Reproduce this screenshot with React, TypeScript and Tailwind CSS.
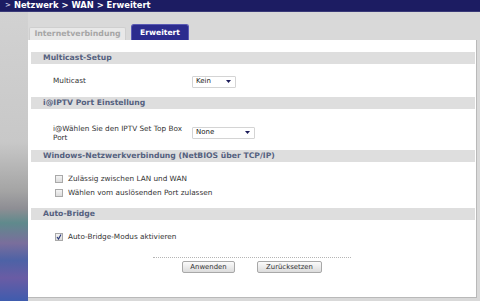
import React from 'react';

const SectionHeader: React.FC<{ title: string }> = ({ title }) => (
  <div className="h-[12px] bg-[#dedede] pl-[12px] flex items-center font-bold text-[7.7px] text-[#55617f] leading-none">
    {title}
  </div>
);

const Select: React.FC<{ value: string; width: string }> = ({ value, width }) => (
  <div className={`${width} h-[12px] bg-white border border-[#d4d4d4] rounded-[1px] flex items-center justify-between pl-[3px] pr-[4px] text-[7px] text-[#222]`}>
    <span>{value}</span>
    <svg width="5" height="3" viewBox="0 0 5 3">
      <path d="M0 0 L5 0 L2.5 3 Z" fill="#1c1c5a" />
    </svg>
  </div>
);

const Checkbox: React.FC<{ checked?: boolean; label: string }> = ({ checked, label }) => (
  <div className="flex items-center gap-[5px] h-[10px]">
    <span className="w-[8px] h-[8px] border border-[#a9a9a9] bg-gradient-to-b from-[#f4f4f4] to-[#dcdcdc] flex items-center justify-center">
      {checked && (
        <svg width="6" height="6" viewBox="0 0 6 6">
          <path d="M1 3 L2.5 5 L5 0.5" stroke="#2b3a7a" strokeWidth="1.2" fill="none" />
        </svg>
      )}
    </span>
    <span className="text-[7.3px] text-[#333]">{label}</span>
  </div>
);

const Button: React.FC<{ label: string; width: string }> = ({ label, width }) => (
  <button className={`${width} h-[12px] border border-[#a8a8a8] rounded-[2px] bg-gradient-to-b from-[#fbfbfb] to-[#dcdcdc] text-[6.9px] text-[#333] leading-none flex items-center justify-center`}>
    {label}
  </button>
);

export default function App() {
  return (
    <div className="w-[480px] h-[301px] overflow-hidden bg-[#d9d9d9] flex flex-col" style={{ fontFamily: '"DejaVu Sans", Verdana, sans-serif' }}>
      {/* Breadcrumb */}
      <div className="h-[12px] shrink-0 bg-[#1c1c62] border-b border-[#3a3a78] flex items-center pl-[5px] gap-[3px] text-white font-bold text-[8.4px] leading-none">
        <span className="text-[#c8c8e0] text-[7px]">&gt;</span>
        <span>Netzwerk &gt; WAN &gt; Erweitert</span>
      </div>

      <div className="flex flex-1">
        {/* sidebar edge */}
        <div className="w-[28px] bg-[linear-gradient(to_bottom,#d2d2d2_0%,#c8c8c8_45%,#a4a4a4_62%,#8e8e94_68%,#5f8a8c_73%,#7a6e9c_80%,#4d62a6_86%,#6a5ca4_92%,#3f5cae_100%)]" />

        <div className="flex-1 flex flex-col pr-[3px] pb-[3px]">
          {/* Tabs */}
          <div className="h-[28px] flex items-end gap-[5px] pl-[1px]">
            <div className="h-[13px] w-[97px] bg-[#e8e8e8] border border-b-0 border-[#cfcfcf] rounded-t-[2px] flex items-center justify-center font-bold text-[7.8px] text-[#a6a6a6] leading-none">
              Internetverbindung
            </div>
            <div className="h-[16px] w-[58px] bg-[#2c2c8e] border border-b-0 border-[#5a5ab4] rounded-t-[3px] flex items-center justify-center font-bold text-[7.6px] text-white leading-none">
              Erweitert
            </div>
          </div>

          {/* Panel */}
          <div className="flex-1 bg-white border-r border-b border-[#b9b9b9] pt-[12px] pl-[3px] pr-[1px] flex flex-col">
            <SectionHeader title="Multicast-Setup" />
            <div className="h-[33px] flex items-center pl-[22px] pt-[2px]">
              <span className="w-[139px] text-[7.3px] text-[#333]">Multicast</span>
              <Select value="Kein" width="w-[44px]" />
            </div>

            <SectionHeader title="i@IPTV Port Einstellung" />
            <div className="h-[41px] flex items-center pl-[22px] pt-[6px]">
              <span className="w-[139px] text-[7.3px] leading-[9px] text-[#333]">
                i@Wählen Sie den IPTV Set Top Box
                <br />
                Port
              </span>
              <Select value="None" width="w-[63px]" />
            </div>

            <SectionHeader title="Windows-Netzwerkverbindung (NetBIOS über TCP/IP)" />
            <div className="h-[46px] flex flex-col gap-[4px] pl-[24px] pt-[12px]">
              <Checkbox label="Zulässig zwischen LAN und WAN" />
              <Checkbox label="Wählen vom auslösenden Port zulassen" />
            </div>

            <SectionHeader title="Auto-Bridge" />
            <div className="pl-[24px] pt-[12px]">
              <Checkbox checked label="Auto-Bridge-Modus aktivieren" />
            </div>

            <div className="mt-[15px] ml-[122px] w-[198px] border-t border-dotted border-[#b5b5b5]" />
            <div className="flex gap-[22px] pl-[151px] pt-[3px]">
              <Button label="Anwenden" width="w-[53px]" />
              <Button label="Zurücksetzen" width="w-[65px]" />
            </div>
          </div>
        </div>
      </div>
    </div>
  );
}
